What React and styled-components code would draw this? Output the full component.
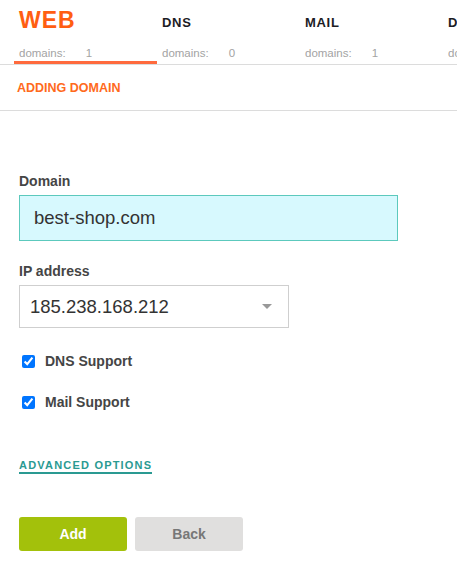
import React from 'react';
import styled, { createGlobalStyle } from 'styled-components';

const GlobalStyle = createGlobalStyle`
    body {
        margin: 0;
        background: #fff;
        font-family: "Liberation Sans", Arial, sans-serif;
        overflow: hidden;
    }
`;

const tabs = [
    { name: 'WEB', count: 1, active: true },
    { name: 'DNS', count: 0 },
    { name: 'MAIL', count: 1 },
    { name: 'DB', count: 0 },
];

const App = () => {
    return (
        <Page>
            <GlobalStyle />
            <TabBar>
                {tabs.map(tab => (
                    <Tab key={tab.name} $active={tab.active}>
                        <TabName $active={tab.active}>{tab.name}</TabName>
                        <TabCount>
                            <span>domains:</span>
                            <span>{tab.count}</span>
                        </TabCount>
                    </Tab>
                ))}
            </TabBar>
            <SubHeader>ADDING DOMAIN</SubHeader>
            <Form>
                <Field>
                    <Label>Domain</Label>
                    <TextInput defaultValue="best-shop.com" />
                </Field>
                <Field>
                    <Label>IP address</Label>
                    <Select>
                        <span>185.238.168.212</span>
                        <Caret />
                    </Select>
                </Field>
                <Checks>
                    <Check>
                        <input type="checkbox" defaultChecked />
                        <span>DNS Support</span>
                    </Check>
                    <Check>
                        <input type="checkbox" defaultChecked />
                        <span>Mail Support</span>
                    </Check>
                </Checks>
                <Advanced href="#">ADVANCED OPTIONS</Advanced>
                <Buttons>
                    <Button $primary>Add</Button>
                    <Button>Back</Button>
                </Buttons>
            </Form>
        </Page>
    );
};

export default App;


const Page = styled.div`
    width: 457px;
    height: 562px;
    overflow: hidden;
`;
const TabBar = styled.div`
    display: flex;
    padding-left: 14px;
    border-bottom: 1px solid #dcdcdc;
    white-space: nowrap;
    overflow: hidden;
`;
const Tab = styled.div`
    flex: 0 0 143px;
    width: 143px;
    height: 64px;
    box-sizing: border-box;
    padding: 8px 0 0 5px;
    border-bottom: 3px solid ${p => (p.$active ? '#ff6a3d' : 'transparent')};
`;
const TabName = styled.div`
    height: 29px;
    display: flex;
    align-items: ${p => (p.$active ? 'flex-start' : 'center')};
    font-weight: bold;
    font-size: ${p => (p.$active ? '23px' : '13px')};
    letter-spacing: ${p => (p.$active ? '1px' : '0.7px')};
    color: ${p => (p.$active ? '#ff5e12' : '#1c1c24')};
    line-height: 25px;
`;
const TabCount = styled.div`
    margin-top: 10px;
    font-size: 11.5px;
    color: #a3a3a3;
    display: flex;
    gap: 20px;
`;
const SubHeader = styled.div`
    padding: 16px 17px 15px;
    font-size: 12.5px;
    font-weight: bold;
    color: #ff6a1c;
    border-bottom: 1px solid #dcdcdc;
`;
const Form = styled.div`
    padding: 62px 19px 0;
    display: flex;
    flex-direction: column;
`;
const Field = styled.div`
    display: flex;
    flex-direction: column;
    margin-bottom: 22px;
`;
const Label = styled.label`
    font-size: 14px;
    font-weight: bold;
    color: #454545;
    margin-bottom: 6px;
`;
const TextInput = styled.input`
    width: 379px;
    height: 46px;
    box-sizing: border-box;
    background: #d7f9fe;
    border: 1px solid #5cc9bd;
    padding: 0 14px;
    font-family: "Liberation Sans", Arial, sans-serif;
    font-size: 18.5px;
    color: #333;
    outline: none;
`;
const Select = styled.div`
    width: 270px;
    height: 43px;
    box-sizing: border-box;
    border: 1px solid #cfcfcf;
    display: flex;
    align-items: center;
    justify-content: space-between;
    padding: 0 16px 0 10px;
    font-size: 18.5px;
    color: #333;
`;
const Caret = styled.div`
    width: 0;
    height: 0;
    border-left: 5px solid transparent;
    border-right: 5px solid transparent;
    border-top: 5px solid #999;
`;
const Checks = styled.div`
    display: flex;
    flex-direction: column;
    gap: 25px;
    margin-top: 3px;
`;
const Check = styled.label`
    display: flex;
    align-items: center;
    gap: 10px;
    font-size: 14px;
    font-weight: bold;
    color: #454545;
    input {
        margin: 0 0 0 3px;
        width: 13px;
        height: 13px;
    }
`;
const Advanced = styled.a`
    align-self: flex-start;
    margin-top: 49px;
    font-size: 11px;
    font-weight: bold;
    letter-spacing: 1.2px;
    color: #2a9a92;
    text-decoration: none;
    border-bottom: 2px solid #2a9a92;
    padding-bottom: 1px;
`;
const Buttons = styled.div`
    display: flex;
    gap: 8px;
    margin-top: 43px;
`;
const Button = styled.button`
    width: 108px;
    height: 34px;
    border: none;
    border-radius: 3px;
    font-family: "Liberation Sans", Arial, sans-serif;
    font-size: 14px;
    font-weight: bold;
    background: ${p => (p.$primary ? '#a3c10b' : '#e0dfde')};
    color: ${p => (p.$primary ? '#fff' : '#777')};
`;
